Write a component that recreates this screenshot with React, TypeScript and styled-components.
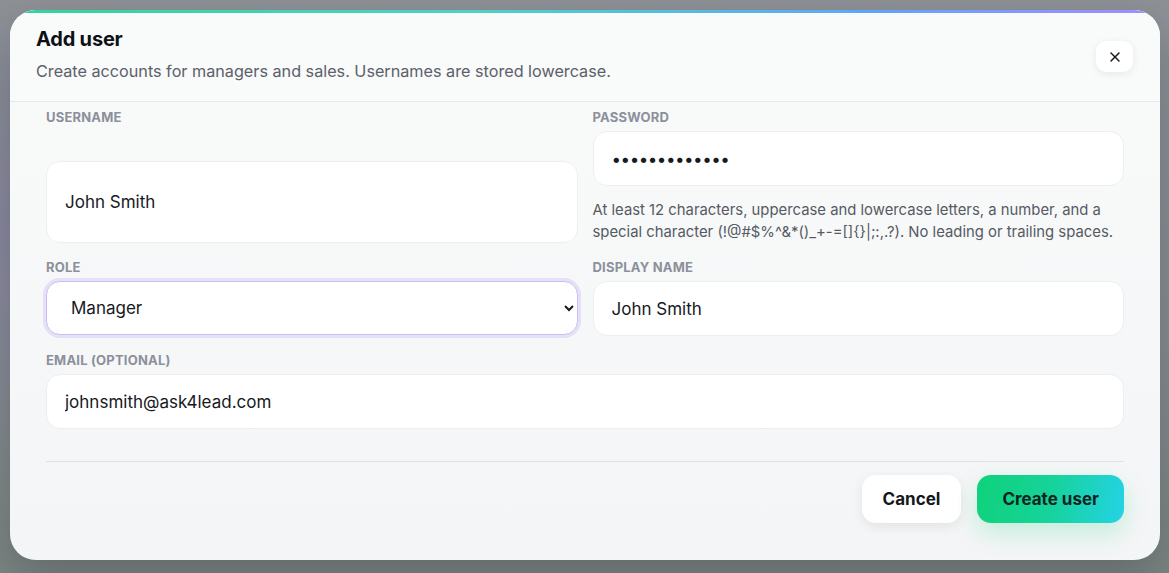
import React from 'react';
import styled, { createGlobalStyle } from 'styled-components';
import { X } from 'lucide-react';

const GlobalStyle = createGlobalStyle`
    html, body {
        margin: 0;
        padding: 0;
    }
    body {
        font-family: Inter, "Noto Sans", Arial, sans-serif;
        color: #111418;
    }
    * {
        box-sizing: border-box;
    }
`;

const App = () => {
    return (
        <Backdrop>
            <GlobalStyle />
            <Modal>
                <Header>
                    <div>
                        <Title>Add user</Title>
                        <Subtitle>Create accounts for managers and sales. Usernames are stored lowercase.</Subtitle>
                    </div>
                    <CloseButton aria-label="Close">
                        <X size={16} strokeWidth={2.2} />
                    </CloseButton>
                </Header>
                <Body>
                    <FormGrid>
                        <Field>
                            <Label>Username</Label>
                            <Input tall defaultValue="John Smith" />
                        </Field>
                        <Field>
                            <Label>Password</Label>
                            <Input type="password" defaultValue="abcdefghijklm" />
                            <Hint>
                                At least 12 characters, uppercase and lowercase letters, a number, and a special
                                character (!@#$%^&*()_+-=[]{'{}'}|;:,.?). No leading or trailing spaces.
                            </Hint>
                        </Field>
                        <Field>
                            <Label>Role</Label>
                            <Select defaultValue="manager">
                                <option value="manager">Manager</option>
                                <option value="sales">Sales</option>
                            </Select>
                        </Field>
                        <Field>
                            <Label>Display name</Label>
                            <Input defaultValue="John Smith" />
                        </Field>
                        <Field wide>
                            <Label>Email (optional)</Label>
                            <Input defaultValue="johnsmith@ask4lead.com" />
                        </Field>
                    </FormGrid>
                    <Divider />
                    <Footer>
                        <GhostButton>Cancel</GhostButton>
                        <PrimaryButton>Create user</PrimaryButton>
                    </Footer>
                </Body>
            </Modal>
        </Backdrop>
    );
};

const Backdrop = styled.div`
    width: 100vw;
    height: 100vh;
    padding: 10px;
    overflow: hidden;
    background:
        radial-gradient(ellipse at 0% 40%, #8a89a0 0%, transparent 45%),
        linear-gradient(180deg, #8e9297 0%, #878c92 60%, #7c8682 100%);
`;

const Modal = styled.div`
    position: relative;
    width: 1150px;
    height: 550px;
    border-radius: 26px;
    background: linear-gradient(180deg, #f9fafa 0%, #f4f5f6 100%);
    overflow: hidden;
    box-shadow: 0 20px 50px rgba(20, 24, 30, 0.25);

    &::before {
        content: '';
        position: absolute;
        top: 0;
        left: 0;
        right: 0;
        height: 3px;
        background: linear-gradient(90deg, #34d399 0%, #4fd1c5 40%, #60a5fa 75%, #a78bfa 100%);
    }
`;

const Header = styled.header`
    display: flex;
    justify-content: space-between;
    align-items: flex-start;
    height: 92px;
    padding: 17px 27px 0 26px;
    border-bottom: 1px solid #e6e8eb;
    background: #f9fafa;
`;

const Title = styled.h1`
    margin: 0;
    font-size: 20px;
    line-height: 24px;
    font-weight: 700;
    color: #0d1117;
    letter-spacing: -0.2px;
`;

const Subtitle = styled.p`
    margin: 9px 0 0;
    font-size: 16.2px;
    line-height: 22px;
    color: #5b6069;
`;

const CloseButton = styled.button`
    display: flex;
    align-items: center;
    justify-content: center;
    width: 37px;
    height: 31px;
    margin-top: 14px;
    border: none;
    border-radius: 10px;
    background: #ffffff;
    color: #15181d;
    box-shadow: 0 2px 8px rgba(15, 20, 30, 0.08);
    cursor: pointer;
`;

const Body = styled.div`
    padding: 7px 36px 0;
`;

const FormGrid = styled.div`
    display: grid;
    grid-template-columns: 1fr 1fr;
    column-gap: 15px;
    row-gap: 16px;
`;

const Field = styled.div<{ wide?: boolean }>`
    display: flex;
    flex-direction: column;
    grid-column: ${(p) => (p.wide ? '1 / -1' : 'auto')};
`;

const Label = styled.label`
    font-size: 13px;
    line-height: 16px;
    font-weight: 700;
    text-transform: uppercase;
    letter-spacing: 0.2px;
    color: #8b909b;
    margin-bottom: 6px;
`;

const Input = styled.input<{ tall?: boolean }>`
    width: 100%;
    height: ${(p) => (p.tall ? '82px' : '55px')};
    margin-top: ${(p) => (p.tall ? 'auto' : '0')};
    padding: 0 18px;
    border: 1px solid #eceef1;
    border-radius: 14px;
    background: #ffffff;
    font-family: Inter, "Noto Sans", Arial, sans-serif;
    font-size: 17px;
    color: #16191e;
    outline: none;

    &[type='password'] {
        font-size: 17px;
        letter-spacing: -0.5px;
    }
`;

const Select = styled.select`
    width: 100%;
    height: 54px;
    padding: 0 10px 0 20px;
    border: 1px solid #c9bff5;
    border-radius: 14px;
    background: #ffffff;
    box-shadow: 0 0 0 3px rgba(167, 139, 250, 0.22);
    font-family: Inter, "Noto Sans", Arial, sans-serif;
    font-size: 17px;
    color: #16191e;
    outline: none;
`;

const Hint = styled.p`
    margin: 13px 0 0;
    font-size: 14.85px;
    line-height: 22px;
    color: #555a63;
`;

const Divider = styled.hr`
    margin: 32px 0 0;
    border: none;
    border-top: 1px solid #dfe1e5;
`;

const Footer = styled.div`
    display: flex;
    justify-content: flex-end;
    gap: 16px;
    padding-top: 13px;
`;

const GhostButton = styled.button`
    height: 48px;
    padding: 0 21px;
    border: none;
    border-radius: 14px;
    background: #ffffff;
    box-shadow: 0 4px 12px rgba(15, 20, 30, 0.08);
    font-family: Inter, "Noto Sans", Arial, sans-serif;
    font-size: 17px;
    font-weight: 700;
    color: #14171c;
    cursor: pointer;
`;

const PrimaryButton = styled.button`
    height: 48px;
    padding: 0 25px;
    border: none;
    border-radius: 14px;
    background: linear-gradient(100deg, #0fd27a 0%, #16d39a 50%, #24d3e6 100%);
    box-shadow: 0 10px 24px rgba(16, 210, 122, 0.22);
    font-family: Inter, "Noto Sans", Arial, sans-serif;
    font-size: 17px;
    font-weight: 700;
    color: #0f2521;
    cursor: pointer;
`;

export default App;
